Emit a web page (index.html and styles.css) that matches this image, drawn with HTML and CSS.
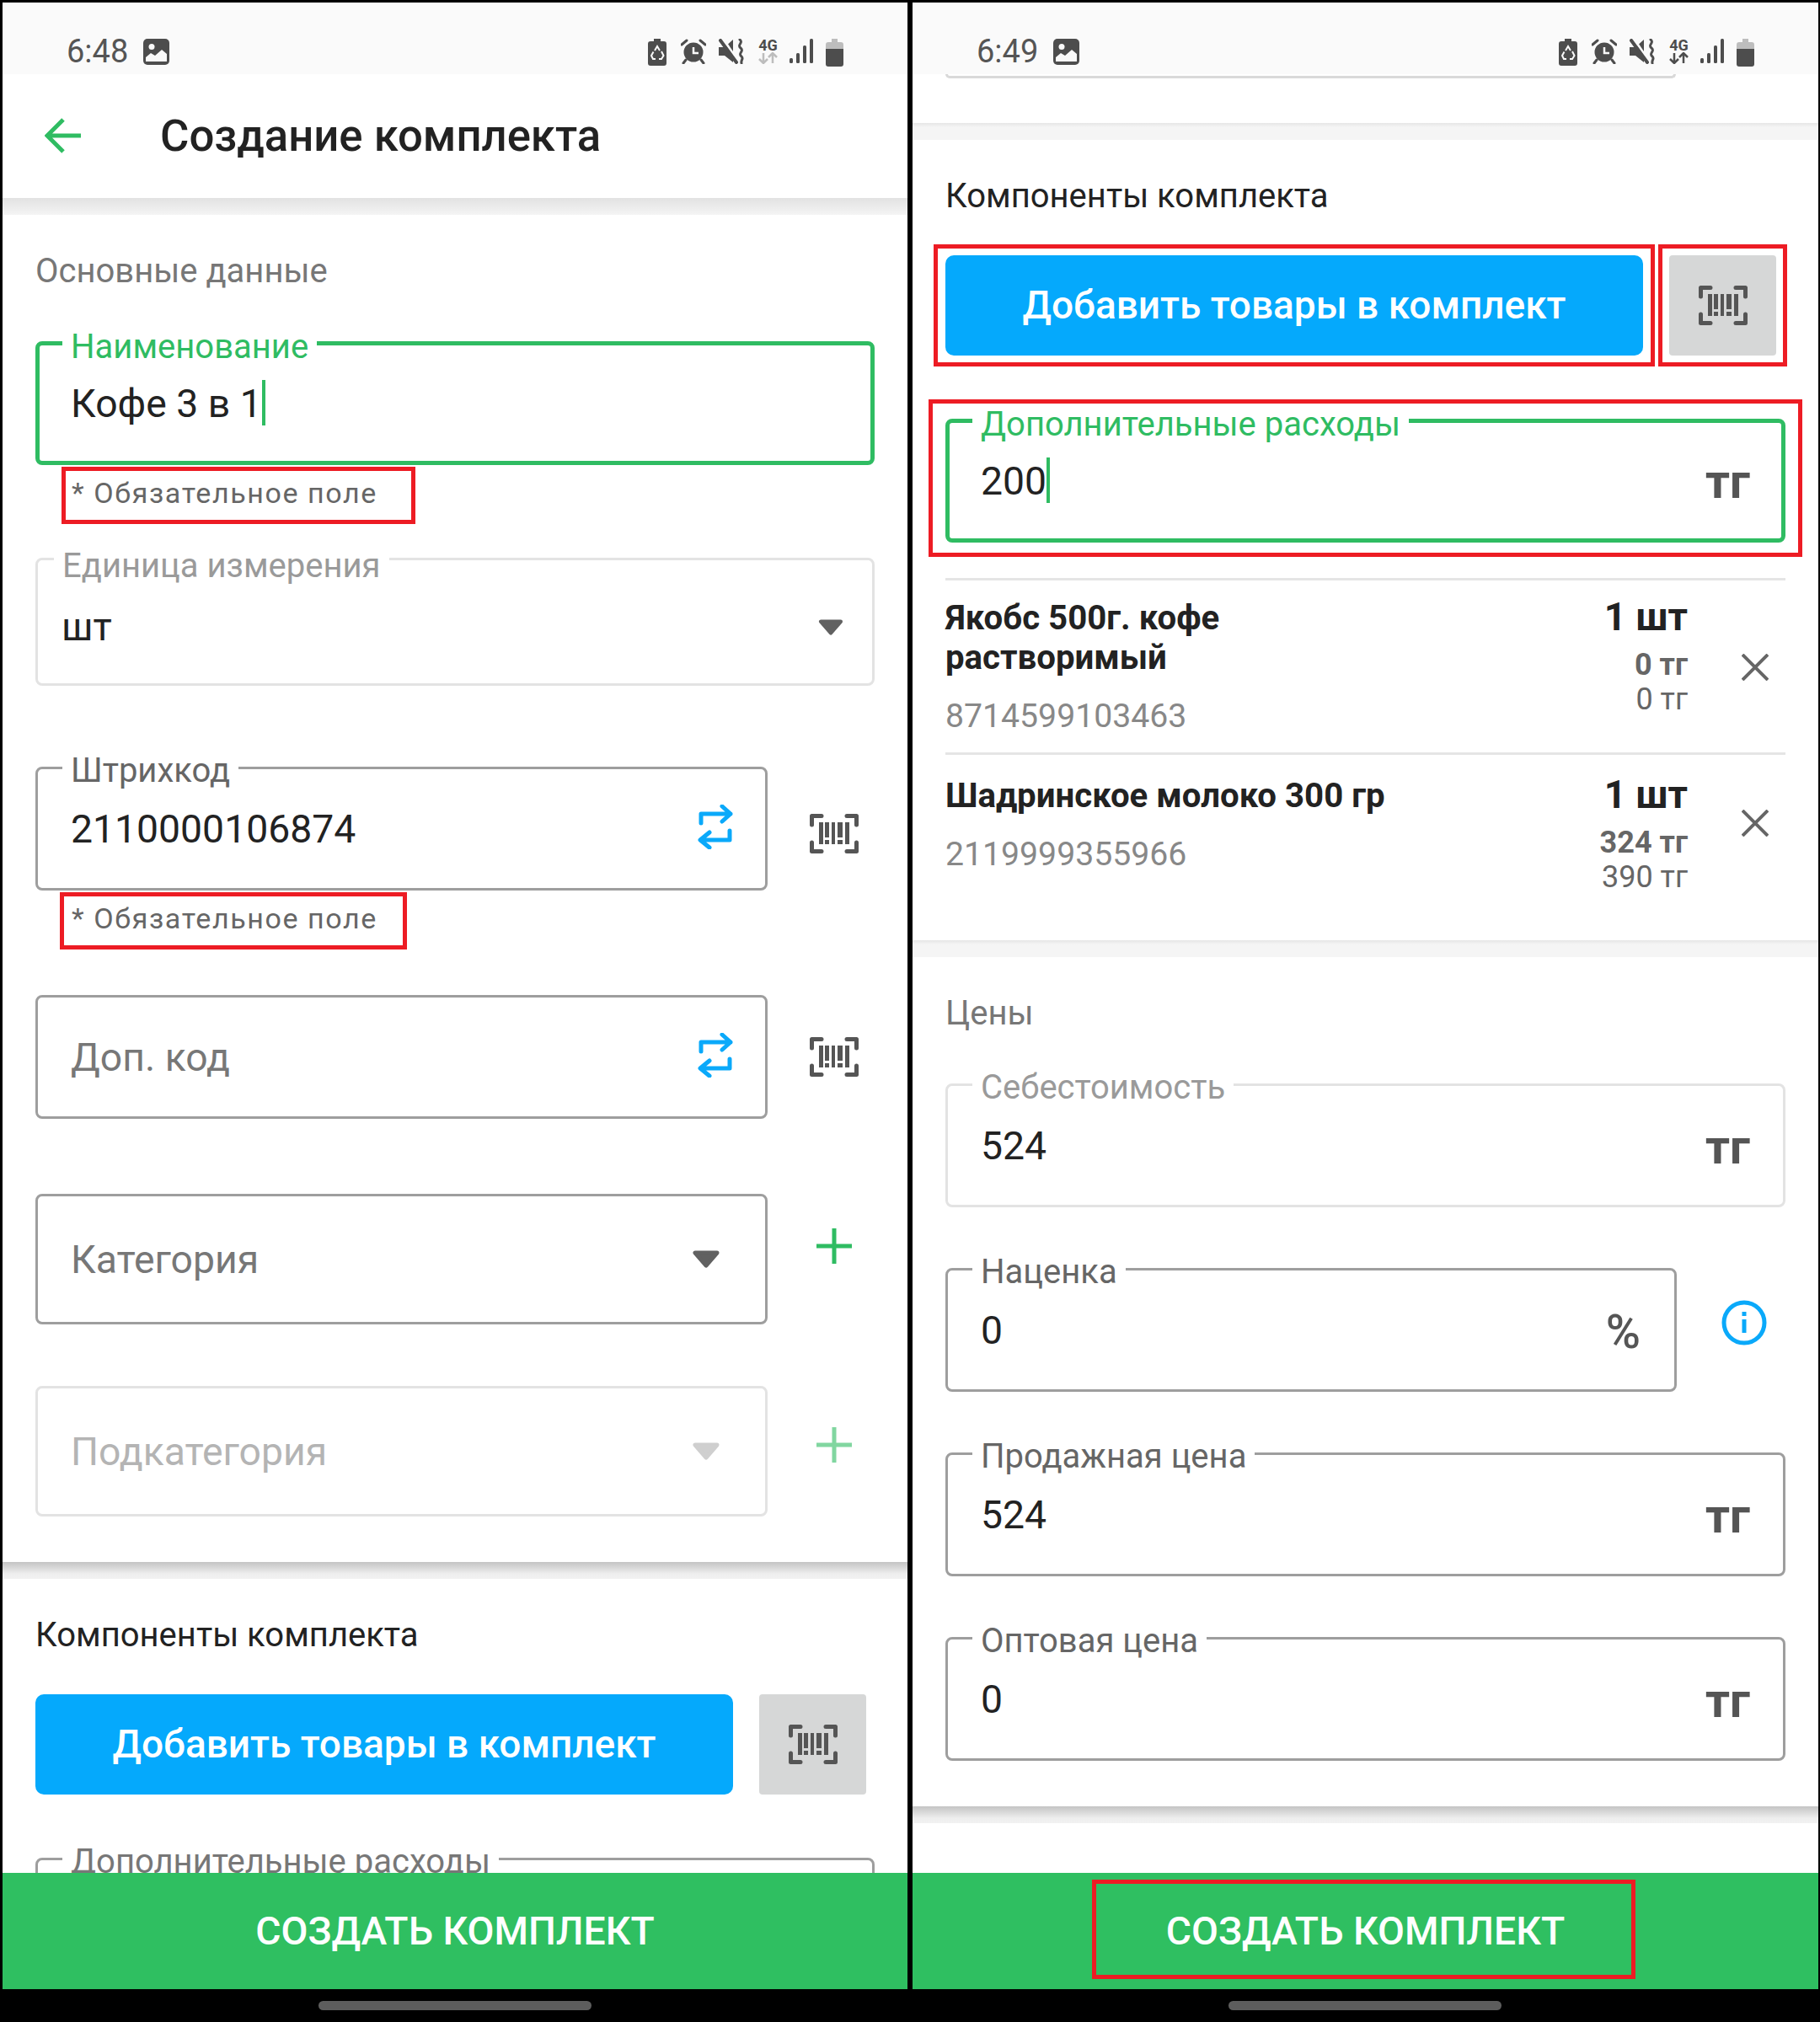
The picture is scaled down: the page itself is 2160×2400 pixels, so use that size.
FILE: index.html
```html
<!DOCTYPE html>
<html lang="ru">

<head>
    <meta charset="UTF-8">
    <title>Создание комплекта</title>
    <link rel="stylesheet" href="styles.css">
</head>

<body>

    <svg class="icon-defs" xmlns="http://www.w3.org/2000/svg">
        <symbol id="i-picture" viewBox="0 0 31 31">
            <rect width="31" height="31" rx="5" fill="#4d4d4d" />
            <circle cx="10" cy="9.500" r="3.500" fill="#fafafa" />
            <path d="M3 27v-5l6-5 5 3 8-7 6 5v9z" fill="#fafafa" />
        </symbol>
        <symbol id="i-batsave" viewBox="0 0 22 32">
            <path d="M7 0h8v3h4a3 3 0 0 1 3 3v23a3 3 0 0 1-3 3H3a3 3 0 0 1-3-3V6a3 3 0 0 1 3-3h4z" fill="#4d4d4d" />
            <path d="M8 14l3-5 3 5M16 15l2.500 5-2.500 4h-3M9 24H6l-2-4 2.500-4.500" fill="none" stroke="#fafafa" stroke-width="2" />
        </symbol>
        <symbol id="i-alarm" viewBox="0 0 30 30">
            <circle cx="15" cy="16" r="11.500" fill="#4d4d4d" />
            <path d="M15 10v7h6" fill="none" stroke="#fafafa" stroke-width="2.500" />
            <path d="M1 7l6-5M29 7l-6-5M6 25l-3 4M24 25l3 4" fill="none" stroke="#4d4d4d" stroke-width="3" stroke-linecap="round" />
        </symbol>
        <symbol id="i-mute" viewBox="0 0 30 30">
            <path d="M0 10h7l10-9v27L7 20H0z" fill="#4d4d4d" />
            <path d="M5 0l17 25" stroke="#fafafa" stroke-width="3" />
            <path d="M2 2l19 26" stroke="#4d4d4d" stroke-width="4" stroke-linecap="round" />
            <path d="M25 1c5 4-4 6 1 10s-4 6 1 10c3 3-1 4 0 8" fill="none" stroke="#4d4d4d" stroke-width="3" stroke-linecap="round" />
        </symbol>
        <symbol id="i-updown" viewBox="0 0 23 14">
            <path d="M6 1v12M1 8l5 5 5-5M17 13V1M12 6l5-5 5 5" fill="none" stroke="currentColor" stroke-width="2.500" />
        </symbol>
        <symbol id="i-signal" viewBox="0 0 28 29">
            <rect x="0" y="23" width="4" height="6" rx="1.500" fill="#4d4d4d" />
            <rect x="8" y="17" width="4" height="12" rx="1.500" fill="#4d4d4d" />
            <rect x="16" y="8" width="4" height="21" rx="1.500" fill="#4d4d4d" />
            <rect x="24" y="0" width="4" height="29" rx="1.500" fill="#4d4d4d" />
        </symbol>
        <symbol id="i-battery" viewBox="0 0 21 33">
            <path d="M7 0h7v4h4a3 3 0 0 1 3 3v5H0V7a3 3 0 0 1 3-3h4z" fill="#bdbdbd" />
            <path d="M0 12h21v18a3 3 0 0 1-3 3H3a3 3 0 0 1-3-3z" fill="#4d4d4d" />
        </symbol>
        <symbol id="i-back" viewBox="0 0 44 42">
            <path d="M43 21H3M22 2L3 21l19 19" fill="none" stroke="#2fbc62" stroke-width="5" />
        </symbol>
        <symbol id="i-barcode" viewBox="0 0 58 47">
            <path d="M14 2.500H2.500V13M44 2.500h11.500V13M14 44.500H2.500V34M44 44.500h11.500V34" fill="none" stroke="#555" stroke-width="5" stroke-linecap="round" stroke-linejoin="round" />
            <path d="M11 10h5v26h-5zM18 10h5v18h-5zM18 31h5v5h-5zM26 10h4v26h-4zM33 10h6v18h-6zM33 31h6v5h-6zM42 10h5v26h-5z" fill="#555" />
        </symbol>
        <symbol id="i-swap" viewBox="0 0 43 53">
            <path d="M4 22V11h35M29 2l10 9-10 9M38 31v11H4M14 33L3 42l11 9" fill="none" stroke="#0aa9fa" stroke-width="5" stroke-linecap="round" stroke-linejoin="round" />
        </symbol>
        <symbol id="i-plus" viewBox="0 0 42 42">
            <path d="M21 0v42M0 21h42" fill="none" stroke="#2fbc62" stroke-width="5" />
        </symbol>
        <symbol id="i-close" viewBox="0 0 32 32">
            <path d="M1 1l30 30M31 1L1 31" fill="none" stroke="#666" stroke-width="4" />
        </symbol>
        <symbol id="i-info" viewBox="0 0 54 54">
            <circle cx="27" cy="27" r="24" fill="none" stroke="#0aa9fa" stroke-width="5" />
            <path d="M24.500 14h5v5h-5zM24.500 23h5v16h-5z" fill="#0aa9fa" />
        </symbol>
        <symbol id="i-tri" viewBox="0 0 32 21">
            <path d="M3 3h26L16 18z" fill="currentColor" stroke="currentColor" stroke-width="5" stroke-linejoin="round" />
        </symbol>
    </svg>

    <div class="screens">

        <!-- Left screen -->
        <div class="screen">
            <div class="status">
                <span class="status-time">6:48</span>
                <svg class="ic-picture"><use href="#i-picture" /></svg>
                <div class="status-right">
                    <svg class="ic-batsave"><use href="#i-batsave" /></svg>
                    <svg class="ic-alarm"><use href="#i-alarm" /></svg>
                    <svg class="ic-mute"><use href="#i-mute" /></svg>
                    <div class="net net-idle">4G<svg class="ic-updown"><use href="#i-updown" /></svg></div>
                    <svg class="ic-signal"><use href="#i-signal" /></svg>
                    <svg class="ic-battery"><use href="#i-battery" /></svg>
                </div>
            </div>

            <div class="scroll">
                <div class="topbar">
                    <svg class="ic-back"><use href="#i-back" /></svg>
                    <h1>Создание комплекта</h1>
                </div>
                <div class="sep"></div>

                <section class="card card-main">
                    <h2 class="muted">Основные данные</h2>

                    <div class="field active">
                        <span class="field-label">Наименование</span>
                        <span class="field-value">Кофе 3 в 1<i class="caret"></i></span>
                    </div>
                    <div class="hint">* Обязательное поле</div>

                    <div class="field light row-unit select-unit">
                        <span class="field-label">Единица измерения</span>
                        <span class="field-value">шт</span>
                        <svg class="tri tri-small"><use href="#i-tri" /></svg>
                    </div>

                    <div class="row row-code">
                        <div class="field short">
                            <span class="field-label dark">Штрихкод</span>
                            <span class="field-value">2110000106874</span>
                            <svg class="ic-swap"><use href="#i-swap" /></svg>
                        </div>
                        <svg class="ic-barcode side nudge-down"><use href="#i-barcode" /></svg>
                    </div>
                    <div class="hint hint-narrow">* Обязательное поле</div>

                    <div class="row row-extra">
                        <div class="field short">
                            <span class="field-value placeholder">Доп. код</span>
                            <svg class="ic-swap"><use href="#i-swap" /></svg>
                        </div>
                        <svg class="ic-barcode side"><use href="#i-barcode" /></svg>
                    </div>

                    <div class="row row-cat">
                        <div class="field short tall">
                            <span class="field-value placeholder">Категория</span>
                            <svg class="tri"><use href="#i-tri" /></svg>
                        </div>
                        <svg class="ic-plus side plus-up"><use href="#i-plus" /></svg>
                    </div>

                    <div class="row row-subcat">
                        <div class="field short tall light">
                            <span class="field-value faded">Подкатегория</span>
                            <svg class="tri faded-tri"><use href="#i-tri" /></svg>
                        </div>
                        <svg class="ic-plus side plus-faded"><use href="#i-plus" /></svg>
                    </div>
                </section>
                <div class="sep sep-dark"></div>

                <section class="card">
                    <h2 class="kit-title">Компоненты комплекта</h2>
                    <div class="kit-actions">
                        <button class="btn-add">Добавить товары в комплект</button>
                        <button class="btn-scan"><svg class="ic-barcode"><use href="#i-barcode" /></svg></button>
                    </div>
                    <div class="field row-costs">
                        <span class="field-label">Дополнительные расходы</span>
                    </div>
                </section>
            </div>

            <button class="btn-create"><span>СОЗДАТЬ КОМПЛЕКТ</span></button>
        </div>

        <!-- Right screen, scrolled down -->
        <div class="screen">
            <div class="status">
                <span class="status-time">6:49</span>
                <svg class="ic-picture"><use href="#i-picture" /></svg>
                <div class="status-right">
                    <svg class="ic-batsave"><use href="#i-batsave" /></svg>
                    <svg class="ic-alarm"><use href="#i-alarm" /></svg>
                    <svg class="ic-mute"><use href="#i-mute" /></svg>
                    <div class="net">4G<svg class="ic-updown"><use href="#i-updown" /></svg></div>
                    <svg class="ic-signal"><use href="#i-signal" /></svg>
                    <svg class="ic-battery"><use href="#i-battery" /></svg>
                </div>
            </div>

            <div class="scroll">
                <div class="card-stub"><div class="stub-line"></div></div>
                <div class="sep sep-soft"></div>

                <section class="card card-items">
                    <h2 class="kit-title">Компоненты комплекта</h2>
                    <div class="kit-actions">
                        <button class="btn-add marked">Добавить товары в комплект</button>
                        <button class="btn-scan marked marked-scan"><svg class="ic-barcode"><use href="#i-barcode" /></svg></button>
                    </div>
                    <div class="field active row-costs marked marked-field">
                        <span class="field-label">Дополнительные расходы</span>
                        <span class="field-value">200<i class="caret"></i></span>
                        <span class="unit">тг</span>
                    </div>

                    <div class="items">
                        <div class="item">
                            <div class="item-info">
                                <div class="item-name">Якобс 500г. кофе растворимый</div>
                                <div class="item-code">8714599103463</div>
                            </div>
                            <div class="item-nums">
                                <div class="item-qty">1 шт</div>
                                <div class="item-cost">0 тг</div>
                                <div class="item-price">0 тг</div>
                            </div>
                            <svg class="ic-close"><use href="#i-close" /></svg>
                        </div>
                        <div class="item">
                            <div class="item-info">
                                <div class="item-name">Шадринское молоко 300 гр</div>
                                <div class="item-code">2119999355966</div>
                            </div>
                            <div class="item-nums">
                                <div class="item-qty">1 шт</div>
                                <div class="item-cost">324 тг</div>
                                <div class="item-price">390 тг</div>
                            </div>
                            <svg class="ic-close"><use href="#i-close" /></svg>
                        </div>
                    </div>
                </section>
                <div class="sep sep-soft"></div>

                <section class="card card-prices">
                    <h2 class="muted">Цены</h2>
                    <div class="field light price-first">
                        <span class="field-label">Себестоимость</span>
                        <span class="field-value">524</span>
                        <span class="unit">тг</span>
                    </div>
                    <div class="row price-row">
                        <div class="field markup">
                            <span class="field-label dark">Наценка</span>
                            <span class="field-value">0</span>
                            <span class="percent">%</span>
                        </div>
                        <svg class="ic-info"><use href="#i-info" /></svg>
                    </div>
                    <div class="field price-row">
                        <span class="field-label dark">Продажная цена</span>
                        <span class="field-value">524</span>
                        <span class="unit">тг</span>
                    </div>
                    <div class="field price-row">
                        <span class="field-label dark">Оптовая цена</span>
                        <span class="field-value">0</span>
                        <span class="unit">тг</span>
                    </div>
                </section>
                <div class="sep sep-dark"></div>
                <div class="card-rest"></div>
            </div>

            <button class="btn-create"><span class="marked marked-create">СОЗДАТЬ КОМПЛЕКТ</span></button>
        </div>
    </div>

    <div class="nav-strip">
        <div class="home-slot"><i class="home-bar"></i></div>
        <div class="home-slot"><i class="home-bar"></i></div>
    </div>

</body>

</html>
```

FILE: styles.css
```css
* {
    box-sizing: border-box;
}

html,
body {
    margin: 0;
    height: 2400px;
    background-color: #000;
    overflow: hidden;
}

body {
    padding: 3px 2px 0 3px;
    font-family: Roboto, "Noto Sans", sans-serif;
    color: #222;
}

.icon-defs {
    display: none;
}

.screens {
    display: flex;
    gap: 6px;
}

.screen {
    width: 1074px;
    height: 2358px;
    display: flex;
    flex-direction: column;
    background-color: #fff;
}

.screen + .screen {
    width: 1075px;
}

/* status bar */
.status {
    flex: none;
    height: 85px;
    padding: 43px 76px 0 76px;
    display: flex;
    align-items: flex-start;
    background-color: #fafafa;
    position: relative;
    z-index: 2;
}

.status-time {
    font-size: 38px;
    line-height: 31px;
    color: #555;
    margin-right: 18px;
}

.status-right {
    margin-left: auto;
    display: flex;
    align-items: flex-start;
}

.ic-picture {
    width: 31px;
    height: 31px;
}

.ic-batsave {
    width: 22px;
    height: 32px;
}

.ic-alarm {
    width: 30px;
    height: 30px;
    margin-left: 17px;
}

.ic-mute {
    width: 30px;
    height: 30px;
    margin-left: 15px;
}

.net {
    width: 23px;
    margin-left: 17px;
    font-size: 18px;
    font-weight: 700;
    line-height: 16px;
    color: #4d4d4d;
    text-align: center;
}

.ic-updown {
    display: block;
    width: 23px;
    height: 14px;
    color: #4d4d4d;
}

.net-idle .ic-updown {
    color: #bdbdbd;
}

.ic-signal {
    width: 28px;
    height: 29px;
    margin-left: 14px;
}

.ic-battery {
    width: 21px;
    height: 33px;
    margin-left: 15px;
}

/* scrolling part */
.scroll {
    flex: 1;
    min-height: 0;
    overflow: hidden;
}

.topbar {
    height: 147px;
    padding: 0 0 1px 50px;
    display: flex;
    align-items: center;
}

.ic-back {
    width: 44px;
    height: 42px;
}

h1 {
    margin: 0 0 0 93px;
    font-size: 52.700px;
    font-weight: 500;
    color: #222;
}

.sep {
    height: 20px;
    background: linear-gradient(#e2e2e2, #f4f4f4);
}

.sep-dark {
    background: linear-gradient(#c4c4c4, #eee 70%, #f1f1f1);
}

.sep-soft {
    background: linear-gradient(#e6e6e6, #f5f5f5 25%);
}

.card {
    padding: 44px 39px 54px;
}

h2 {
    margin: 0;
    font-size: 40px;
    font-weight: 400;
    line-height: 46px;
}

h2.muted {
    color: #777;
}

.card-main h2 {
    margin-bottom: 60px;
}

/* outlined field */
.field {
    position: relative;
    height: 147px;
    padding: 0 41px 0 39px;
    display: flex;
    align-items: center;
    border: 3px solid #9e9e9e;
    border-radius: 8px;
    background-color: #fff;
}

.field.active {
    border: 5px solid #2fbc62;
}

.field.light {
    border-color: #e3e3e3;
}

.field.short {
    width: 869px;
}

.field.tall {
    height: 155px;
    padding-right: 54px;
}

.field-label {
    position: absolute;
    top: -20px;
    left: 29px;
    padding: 0 10px;
    background-color: #fff;
    font-size: 40px;
    line-height: 44px;
    color: #777;
    white-space: nowrap;
}

.field.active .field-label {
    left: 27px;
    top: -20px;
    color: #2fbc62;
}

.field.light .field-label {
    color: #9a9a9a;
}

.field-label.dark {
    color: #666;
}

.field-value {
    flex: 1;
    font-size: 46.300px;
    line-height: 56px;
    color: #222;
}

.field.active .field-value {
    margin-left: -2px;
}

.placeholder {
    color: #777;
}

.faded {
    color: #b4b4b4;
}

.caret {
    display: inline-block;
    width: 4px;
    height: 54px;
    background-color: #2fbc62;
    vertical-align: -10px;
}

.unit {
    font-size: 57px;
    font-weight: 700;
    line-height: 56px;
    color: #555;
    margin: 4px -2px 0 0;
}

.field.active .unit {
    margin: 2px -4px 0 0;
}

.percent {
    font-size: 56px;
    font-weight: 500;
    line-height: 56px;
    color: #555;
    margin: 4px -1px 0 0;
}

.tri {
    width: 32px;
    height: 21px;
    color: #616161;
}

.tri-small {
    height: 19px;
}

.faded-tri {
    color: #cfcfcf;
}

.hint {
    width: 420px;
    height: 68px;
    margin: 2px 0 0 31px;
    padding-left: 7px;
    border: 5px solid #ed1c24;
    font-size: 34px;
    line-height: 52px;
    letter-spacing: 1.600px;
    color: #666;
    white-space: nowrap;
}

.hint-narrow {
    width: 412px;
    margin-left: 29px;
    padding-left: 9px;
}

.row {
    display: flex;
    align-items: center;
}

.row-unit {
    margin-top: 40px;
    height: 152px;
    padding: 12px 33px 0 28px;
}

.row-unit .field-label {
    top: -15px;
    left: 19px;
}

.row-code {
    margin-top: 96px;
}

.row-extra {
    margin-top: 54px;
}

.row-cat {
    margin-top: 89px;
}

.row-subcat {
    margin-top: 73px;
}

.side {
    margin-left: 50px;
}

.nudge-down {
    margin-top: 11px;
}

.plus-up {
    margin-bottom: 32px;
    margin-left: 58px;
}

.plus-faded {
    margin-bottom: 16px;
    margin-left: 58px;
    opacity: 0.6;
}

.ic-barcode {
    width: 58px;
    height: 47px;
}

.ic-swap {
    width: 43px;
    height: 53px;
    margin: 0 -4px 4px 0;
}

.ic-plus {
    width: 42px;
    height: 42px;
}

/* kit components */
.kit-title {
    color: #222;
}

.kit-actions {
    margin-top: 47px;
    display: flex;
    gap: 31px;
}

button {
    font-family: inherit;
    border: none;
}

.btn-add {
    width: 828px;
    height: 119px;
    padding-bottom: 3px;
    border-radius: 10px;
    background-color: #05a9fc;
    color: #fff;
    font-size: 46px;
    font-weight: 500;
}

.btn-scan {
    width: 127px;
    height: 119px;
    padding: 0;
    border-radius: 4px;
    background-color: #d6d7d7;
}

.btn-scan .ic-barcode {
    display: block;
    margin: 0 auto;
}

.row-costs {
    margin-top: 75px;
}

/* red marks on top of the controls */
.marked {
    position: relative;
}

.marked::after {
    content: "";
    position: absolute;
    inset: -13px -14px;
    border: 5px solid #ed1c24;
    pointer-events: none;
}

.marked-scan::after {
    inset: -13px -13px;
}

.marked-field::after {
    inset: -28px -25px -22px;
}

.marked-create::after {
    inset: auto;
    left: -88px;
    right: -84px;
    top: -34px;
    bottom: -30px;
}

/* right screen blocks */
.card-stub {
    height: 58px;
    padding: 0 169px 0 39px;
    background-color: #fff;
}

.stub-line {
    height: 5px;
    border: 3px solid #d9d9d9;
    border-top: none;
    border-radius: 0 0 6px 6px;
}

.card-items {
    padding-bottom: 54px;
}

.items {
    margin-top: 42px;
}

.item {
    display: flex;
    align-items: center;
    padding: 21px 0 19px;
    border-top: 3px solid #e5e5e5;
}

.item + .item {
    padding: 25px 0 0;
}

.item + .item .ic-close {
    margin-bottom: 30px;
}

.item-info {
    flex: 1;
    align-self: flex-start;
}

.item-name {
    width: 440px;
    font-size: 40.200px;
    font-weight: 700;
    line-height: 47px;
    color: #222;
}

.item + .item .item-name {
    width: auto;
}

.item-code {
    margin-top: 23px;
    font-size: 39.200px;
    line-height: 47px;
    color: #888;
}

.item-nums {
    align-self: flex-start;
    margin-top: -1px;
    text-align: right;
}

.item-qty {
    font-size: 46px;
    font-weight: 700;
    line-height: 47px;
}

.item-cost,
.item-price {
    font-size: 36px;
    line-height: 41px;
    color: #666;
}

.item-cost {
    margin-top: 13px;
    font-weight: 700;
}

.ic-close {
    width: 32px;
    height: 32px;
    margin: 0 20px 0 64px;
}

.card-prices h2 {
    margin-bottom: 60px;
}

.price-row {
    margin-top: 72px;
}

.field.markup {
    width: 868px;
}

.ic-info {
    width: 54px;
    height: 54px;
    margin: 0 0 18px 53px;
}

.card-rest {
    height: 70px;
}

/* bottom button */
.btn-create {
    flex: none;
    height: 138px;
    padding: 0;
    background-color: #2fbf61;
    color: #fff;
    font-size: 46.300px;
    font-weight: 500;
    position: relative;
    z-index: 2;
}

.nav-strip {
    display: flex;
    gap: 6px;
}

.home-slot {
    width: 1074px;
    padding-top: 14px;
    display: flex;
    justify-content: center;
}

.home-bar {
    width: 324px;
    height: 11px;
    border-radius: 6px;
    background-color: #5d5d5d;
}
```
